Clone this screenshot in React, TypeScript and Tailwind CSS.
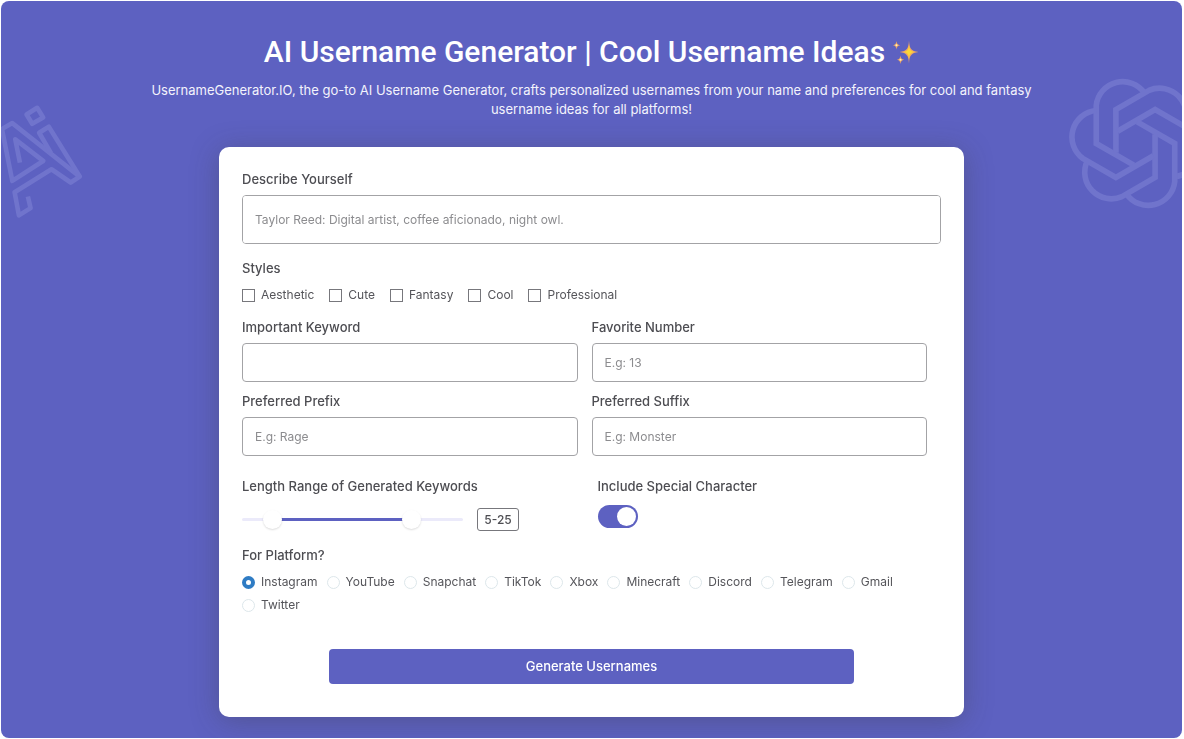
import { useState } from "react";

const STYLES = ["Aesthetic", "Cute", "Fantasy", "Cool", "Professional"];

const PLATFORMS = [
  "Instagram",
  "YouTube",
  "Snapchat",
  "TikTok",
  "Xbox",
  "Minecraft",
  "Discord",
  "Telegram",
  "Gmail",
  "Twitter",
];

const FIELDS = [
  { id: "keyword", label: "Important Keyword", placeholder: "" },
  { id: "number", label: "Favorite Number", placeholder: "E.g: 13" },
  { id: "prefix", label: "Preferred Prefix", placeholder: "E.g: Rage" },
  { id: "suffix", label: "Preferred Suffix", placeholder: "E.g: Monster" },
];

const LABEL = "block text-[13px] leading-5 font-medium text-[#4d4d52]";
const BOX =
  "block w-full rounded-[4px] border border-[#a3a3a6] bg-white px-3 text-xs text-[#4d4d52] placeholder:text-[#8c8c8f]";
const OPTION = "flex items-center gap-1.5 text-xs leading-5 text-[#55555a]";
const THUMB =
  "pointer-events-none absolute inset-0 m-0 h-full w-full appearance-none bg-transparent [&::-webkit-slider-thumb]:pointer-events-auto [&::-webkit-slider-thumb]:size-[19px] [&::-webkit-slider-thumb]:appearance-none [&::-webkit-slider-thumb]:rounded-full [&::-webkit-slider-thumb]:bg-white [&::-webkit-slider-thumb]:shadow-[0_1px_2px_rgba(0,0,0,0.14)]";

function Sparkles() {
  return (
    <svg viewBox="0 0 26 26" className="size-[26px]" aria-hidden="true">
      <g fill="#f0a860">
        <path d="M16 1.500 C16.500 9.500 18 12 25.500 13 C18 14 16.500 16.500 16 24.500 C15.500 16.500 14 14 6.500 13 C14 12 15.500 9.500 16 1.500Z" />
        <path d="M3.500 2 C3.900 5 4.700 5.700 7.200 6.200 C4.700 6.700 3.900 7.500 3.500 10.500 C3.100 7.500 2.300 6.700 0 6.200 C2.300 5.700 3.100 5 3.500 2Z" />
        <path d="M7.500 16.500 C7.900 19.500 8.700 20.200 11.200 20.700 C8.700 21.200 7.900 22 7.500 25 C7.100 22 6.300 21.200 4 20.700 C6.300 20.200 7.100 19.500 7.500 16.500Z" />
      </g>
      <path
        fill="#fdd835"
        d="M16 6 C16.500 10.800 17.500 12.300 21.500 13 C17.500 13.700 16.500 15.200 16 20 C15.500 15.200 14.500 13.700 10.500 13 C14.500 12.300 15.500 10.800 16 6Z"
      />
      <circle cx="3.500" cy="6.200" r="1" fill="#fff0c2" />
      <circle cx="7.500" cy="20.700" r="1" fill="#fff0c2" />
    </svg>
  );
}

function AiMark() {
  return (
    <svg
      viewBox="0 0 250 420"
      className="absolute top-[79px] -left-px h-[140px] w-[83px]"
      fill="none"
      stroke="#7074cc"
      strokeWidth="14"
      strokeLinejoin="round"
      aria-hidden="true"
    >
      <path d="M80 103 112 83 130 112 97 131Z" />
      <path d="M60 248 46 178 130 243 37 303 6 147 37 129 240 290 213 308 155 268 44 337 57 407 92 385 84 350" />
      <path d="M154 220 118 158 147 140 240 290" />
    </svg>
  );
}

const KNOT_TURNS = [0, 60, 120, 180, 240, 300];

function KnotMark() {
  return (
    <svg
      viewBox="-200 -200 400 400"
      className="absolute top-[76px] -right-5 size-[133px]"
      fill="none"
      stroke="#7074cc"
      strokeWidth="17"
      aria-hidden="true"
    >
      {KNOT_TURNS.map((turn) => (
        <path
          key={turn}
          transform={`rotate(${turn})`}
          d="M27 -152 A80 80 0 0 0 -118 -115 L-118 0 L-5 65"
        />
      ))}
    </svg>
  );
}

function LengthRange() {
  const min = 2;
  const max = 31;
  const [low, setLow] = useState(5);
  const [high, setHigh] = useState(25);
  const percent = (value: number) => ((value - min) / (max - min)) * 100;

  return (
    <div className="mt-3 flex items-center gap-3.5">
      <div className="relative flex h-[23px] w-[221px] items-center">
        <div className="h-[3px] w-full rounded-full bg-[#ebeafa] px-2.5">
          <div className="relative h-full">
            <div
              className="absolute inset-y-0 bg-[#5d61c1]"
              style={{ left: `${percent(low)}%`, right: `${100 - percent(high)}%` }}
            />
          </div>
        </div>
        <input
          type="range"
          aria-label="Minimum length"
          min={min}
          max={max}
          value={low}
          onChange={(e) => setLow(Math.min(Number(e.target.value), high))}
          className={THUMB}
        />
        <input
          type="range"
          aria-label="Maximum length"
          min={min}
          max={max}
          value={high}
          onChange={(e) => setHigh(Math.max(Number(e.target.value), low))}
          className={THUMB}
        />
      </div>
      <output className="flex h-[23px] w-[42px] items-center justify-center rounded-[3px] border border-[#77777c] text-xs font-medium text-[#4d4d52]">
        {low}-{high}
      </output>
    </div>
  );
}

export default function App() {
  return (
    <div className="flex min-h-screen bg-white p-px pr-0.5 font-['Inter','Liberation_Sans',sans-serif]">
      <main className="relative flex w-full flex-col items-center overflow-hidden rounded-lg bg-[#5d61c1] px-4 pt-[33px] pb-5">
        <AiMark />
        <KnotMark />

        <h1 className="flex items-center gap-2 font-['Roboto','Liberation_Sans',sans-serif] text-[30px] leading-9 font-medium text-white">
          AI Username Generator | Cool Username Ideas
          <Sparkles />
        </h1>
        <p className="mt-[11px] max-w-[920px] text-center text-[13px] leading-[19px] text-[#f3f3fc]">
          UsernameGenerator.IO, the go-to AI Username Generator, crafts personalized usernames from your name and
          preferences for cool and fantasy username ideas for all platforms!
        </p>

        <form
          className="relative mt-7 w-full max-w-[745px] rounded-[10px] bg-white px-[23px] pt-[22px] pb-[33px] shadow-[0_4px_28px_rgba(60,60,60,0.35)]"
          onSubmit={(e) => e.preventDefault()}
        >
          <label htmlFor="describe" className={LABEL}>
            Describe Yourself
          </label>
          <textarea
            id="describe"
            rows={1}
            placeholder="Taylor Reed: Digital artist, coffee aficionado, night owl."
            className={`${BOX} mt-1.5 h-[49px] resize-none py-4 leading-4`}
          />

          <fieldset className="mt-3.5">
            <legend className={LABEL}>Styles</legend>
            <div className="mt-[7px] flex flex-wrap gap-x-[15px]">
              {STYLES.map((name) => (
                <label key={name} className={OPTION}>
                  <input
                    type="checkbox"
                    className="size-[13px] appearance-none border border-[#77777c] bg-white checked:bg-[#5d61c1]"
                  />
                  {name}
                </label>
              ))}
            </div>
          </fieldset>

          <div className="mt-3 mr-3.5 grid grid-cols-2 gap-x-3.5 gap-y-[9px]">
            {FIELDS.map((field) => (
              <div key={field.id}>
                <label htmlFor={field.id} className={LABEL}>
                  {field.label}
                </label>
                <input
                  id={field.id}
                  type="text"
                  placeholder={field.placeholder}
                  className={`${BOX} mt-1.5 h-[39px]`}
                />
              </div>
            ))}
          </div>

          <div className="mt-5 grid grid-cols-2 gap-x-3">
            <div>
              <span className={LABEL}>Length Range of Generated Keywords</span>
              <LengthRange />
            </div>
            <div>
              <label htmlFor="special" className={LABEL}>
                Include Special Character
              </label>
              <input
                id="special"
                type="checkbox"
                role="switch"
                defaultChecked
                className="mt-[9px] flex h-[23px] w-10 appearance-none items-center rounded-full bg-[#c9c9d4] px-0.5 before:size-[19px] before:rounded-full before:bg-white before:content-[''] checked:justify-end checked:bg-[#5d61c1]"
              />
            </div>
          </div>

          <fieldset className="mt-3.5">
            <legend className={LABEL}>For Platform?</legend>
            <div className="mt-[7px] flex flex-wrap gap-x-[9px] gap-y-[3px]">
              {PLATFORMS.map((name) => (
                <label key={name} className={OPTION}>
                  <input
                    type="radio"
                    name="platform"
                    defaultChecked={name === "Instagram"}
                    className="size-[13px] appearance-none rounded-full border border-[#dce6ea] bg-white checked:border-4 checked:border-[#2f7cc4]"
                  />
                  {name}
                </label>
              ))}
            </div>
          </fieldset>

          <button
            type="submit"
            className="mx-auto mt-[34px] block h-[35px] w-3/4 rounded-[4px] bg-[#5d61c1] text-[13px] font-medium text-white"
          >
            Generate Usernames
          </button>
        </form>
      </main>
    </div>
  );
}
